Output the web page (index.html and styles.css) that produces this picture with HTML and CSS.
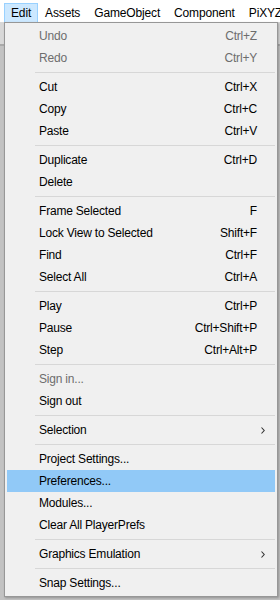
FILE: index.html
```html
<!DOCTYPE html>
<html lang="en">
<head>
  <meta charset="UTF-8">
  <title>Edit menu</title>
  <link rel="stylesheet" href="styles.css">
</head>
<body>
  <div class="menubar">
    <span class="mb-item open">Edit</span>
    <span class="mb-item">Assets</span>
    <span class="mb-item">GameObject</span>
    <span class="mb-item">Component</span>
    <span class="mb-item">PiXYZ</span>
  </div>
  <div class="editor">
    <div class="toolbar"></div>
    <div class="panel"></div>
  </div>

  <div class="dropdown">
    <div class="row disabled"><span class="label">Undo</span><span class="key">Ctrl+Z</span></div>
    <div class="row disabled"><span class="label">Redo</span><span class="key">Ctrl+Y</span></div>
    <div class="sep"></div>
    <div class="row"><span class="label">Cut</span><span class="key">Ctrl+X</span></div>
    <div class="row"><span class="label">Copy</span><span class="key">Ctrl+C</span></div>
    <div class="row"><span class="label">Paste</span><span class="key">Ctrl+V</span></div>
    <div class="sep"></div>
    <div class="row"><span class="label">Duplicate</span><span class="key">Ctrl+D</span></div>
    <div class="row"><span class="label">Delete</span><span class="key"></span></div>
    <div class="sep"></div>
    <div class="row"><span class="label">Frame Selected</span><span class="key">F</span></div>
    <div class="row"><span class="label">Lock View to Selected</span><span class="key">Shift+F</span></div>
    <div class="row"><span class="label">Find</span><span class="key">Ctrl+F</span></div>
    <div class="row"><span class="label">Select All</span><span class="key">Ctrl+A</span></div>
    <div class="sep"></div>
    <div class="row"><span class="label">Play</span><span class="key">Ctrl+P</span></div>
    <div class="row"><span class="label">Pause</span><span class="key">Ctrl+Shift+P</span></div>
    <div class="row"><span class="label">Step</span><span class="key">Ctrl+Alt+P</span></div>
    <div class="sep"></div>
    <div class="row disabled"><span class="label">Sign in...</span><span class="key"></span></div>
    <div class="row"><span class="label">Sign out</span><span class="key"></span></div>
    <div class="sep"></div>
    <div class="row"><span class="label">Selection</span><span class="key"></span>
      <svg class="arrow" width="4" height="7" viewBox="0 0 4 7"><path d="M0.5 0.5 L3.2 3.5 L0.5 6.5" fill="none" stroke="#333" stroke-width="1.1"/></svg>
    </div>
    <div class="sep"></div>
    <div class="row"><span class="label">Project Settings...</span><span class="key"></span></div>
    <div class="row hover"><span class="label">Preferences...</span><span class="key"></span></div>
    <div class="row"><span class="label">Modules...</span><span class="key"></span></div>
    <div class="row"><span class="label">Clear All PlayerPrefs</span><span class="key"></span></div>
    <div class="sep"></div>
    <div class="row"><span class="label">Graphics Emulation</span><span class="key"></span>
      <svg class="arrow" width="4" height="7" viewBox="0 0 4 7"><path d="M0.5 0.5 L3.2 3.5 L0.5 6.5" fill="none" stroke="#333" stroke-width="1.1"/></svg>
    </div>
    <div class="sep"></div>
    <div class="row"><span class="label">Snap Settings...</span><span class="key"></span></div>
  </div>
</body>
</html>
```

FILE: styles.css
```css
body { margin: 0; width: 280px; height: 600px; overflow: hidden; font-family: "Liberation Sans", Arial, sans-serif; font-size: 12px; color: #000; background: #c2c2c2; position: relative;}
.menubar { height: 22px; background: #fff; display: flex; padding: 3px 0 0 4px; box-sizing: border-box; white-space: nowrap; overflow: hidden; letter-spacing: -0.15px;}
.mb-item { height: 19px; padding: 0 6px; box-sizing: border-box; border: 1px solid transparent; border-bottom: none; line-height: 18px;}
.mb-item.open { background: #cce8ff; border-color: #99d1ff;}
.editor { height: 578px; display: flex; flex-direction: column;}
.toolbar { height: 22px; background: #d8d8d8; border-bottom: 2px solid #a9a9a9;}
.panel { flex: 1; background: #c2c2c2;}
.dropdown { position: absolute; left: 4px; top: 22px; width: 268px; padding: 2px; background: #f0f0f0; border: 1px solid #979797; box-shadow: 1px 1px 2px rgba(0,0,0,0.25); letter-spacing: -0.2px;}
.row { height: 22px; line-height: 22px; display: flex; align-items: center; padding: 0 18px 0 32px; white-space: nowrap; position: relative;}
.row .label { flex: 1;}
.row .key { text-align: right;}
.row.disabled { color: #6d6d6d;}
.row.hover { background: #91c9f7;}
.arrow { position: absolute; right: 10px; top: 8px;}
.sep { height: 7px; margin-left: 28px; position: relative;}
.sep::after { content: ""; position: absolute; left: 0; right: 0; top: 3px; height: 1px; background: #d7d7d7;}
```
